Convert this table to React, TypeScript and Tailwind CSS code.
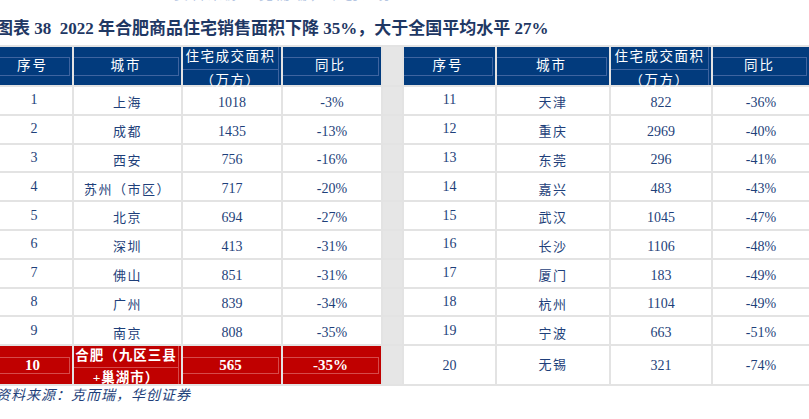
import React from "react";

const serif = { fontFamily: '"Liberation Serif", "Noto Sans CJK SC", serif' };

const left: [string, string, string, string][] = [
  ["1", "上海", "1018", "-3%"],
  ["2", "成都", "1435", "-13%"],
  ["3", "西安", "756", "-16%"],
  ["4", "苏州（市区）", "717", "-20%"],
  ["5", "北京", "694", "-27%"],
  ["6", "深圳", "413", "-31%"],
  ["7", "佛山", "851", "-31%"],
  ["8", "广州", "839", "-34%"],
  ["9", "南京", "808", "-35%"],
];

const right: [string, string, string, string][] = [
  ["11", "天津", "822", "-36%"],
  ["12", "重庆", "2969", "-40%"],
  ["13", "东莞", "296", "-41%"],
  ["14", "嘉兴", "483", "-43%"],
  ["15", "武汉", "1045", "-47%"],
  ["16", "长沙", "1106", "-48%"],
  ["17", "厦门", "183", "-49%"],
  ["18", "杭州", "1104", "-49%"],
  ["19", "宁波", "663", "-51%"],
  ["20", "无锡", "321", "-74%"],
];

function HeadCell({ children, two }: { children?: React.ReactNode; two?: boolean }) {
  return (
    <div className="bg-[#023b7d] flex items-center text-white">
      {two ? (
        <div className="w-full h-full flex flex-col border-r border-[#3e64a0] mr-[2px]">
          <div className="flex-1 flex items-end justify-center pb-[2px] border-b border-[#3e64a0] text-[13.5px] tracking-[1.5px]">
            住宅成交面积
          </div>
          <div className="flex-1 flex items-start justify-center pt-[1px] text-[13.5px] tracking-[1.5px]">
            （万方）
          </div>
        </div>
      ) : (
        <div className="w-full h-[19px] mr-[2px] border-y border-r border-[#3e64a0] flex items-center justify-center text-[13.5px] tracking-[2px]">
          {children}
        </div>
      )}
    </div>
  );
}

function Header() {
  return (
    <>
      <HeadCell>序号</HeadCell>
      <HeadCell>城市</HeadCell>
      <HeadCell two />
      <HeadCell>同比</HeadCell>
    </>
  );
}

function Mid() {
  return <div className="bg-[#e6e6e6]" />;
}

function DataCells({ r }: { r: [string, string, string, string] }) {
  return (
    <>
      <div className="bg-white flex items-center justify-center pb-[1px] text-[14px] text-[#1e3f7a]">{r[0]}</div>
      <div className="bg-white flex items-end justify-center pb-[1px] text-[13px] tracking-[1.5px] text-[#1e3f7a]">{r[1]}</div>
      <div className="bg-white flex items-end justify-center pb-[1px] text-[14px] text-[#1e3f7a]">{r[2]}</div>
      <div className="bg-white flex items-end justify-center pb-[1px] text-[14px] text-[#1e3f7a]">{r[3]}</div>
    </>
  );
}

function CenterCells({ r }: { r: [string, string, string, string] }) {
  return (
    <>
      <div className="bg-white flex items-center justify-center text-[14px] text-[#1e3f7a]">{r[0]}</div>
      <div className="bg-white flex items-center justify-center text-[13px] tracking-[1.5px] text-[#1e3f7a]">{r[1]}</div>
      <div className="bg-white flex items-center justify-center text-[14px] text-[#1e3f7a]">{r[2]}</div>
      <div className="bg-white flex items-center justify-center text-[14px] text-[#1e3f7a]">{r[3]}</div>
    </>
  );
}

function RedCell({ children }: { children: React.ReactNode }) {
  return (
    <div className="bg-[#c00000] flex items-center text-white font-bold">
      <div className="w-full h-[17px] mr-[2px] border-y border-r border-[#d64a4a] flex items-center justify-center text-[15px]">
        {children}
      </div>
    </div>
  );
}

export default function App() {
  return (
    <div className="w-[809px] h-[419px] overflow-hidden bg-white" style={serif}>
      <div className="ml-[-4px] w-[813px]">
        <div className="h-[5px] overflow-hidden">
          <div className="ml-[178px] mt-[-13px] text-[14px] leading-[16px] text-[#b5c6e2] tracking-[3px]">资料来源：克而瑞，华创证券</div>
        </div>
        <div className="h-[40px] pt-[14px] text-[17px] leading-[20px] font-bold text-[#1f3864] whitespace-nowrap">
          图表 38&nbsp; 2022 年合肥商品住宅销售面积下降 35%，大于全国平均水平 27%
        </div>
        <div className="bg-[#e3e3e3] py-[2px]">
          <div className="grid grid-cols-[76px_107px_98px_98px_19px_91px_112px_100px_96px] grid-rows-[38px_repeat(9,26.8px)_38px] gap-[2px]">
            <Header />
            <Mid />
            <Header />
            {left.map((r, i) => (
              <React.Fragment key={r[0]}>
                <DataCells r={r} />
                <Mid />
                <DataCells r={right[i]} />
              </React.Fragment>
            ))}
            <RedCell>10</RedCell>
            <div className="bg-[#c00000] flex items-center text-white">
              <div className="w-full h-full flex flex-col mr-[2px] border-r border-[#d64a4a] text-[13.5px] font-semibold tracking-[1px]">
                <div className="flex-1 flex items-end justify-center pb-[1px] border-b border-[#d64a4a] whitespace-nowrap">合肥（九区三县</div>
                <div className="flex-1 flex items-start justify-center">+巢湖市）</div>
              </div>
            </div>
            <RedCell>565</RedCell>
            <RedCell>-35%</RedCell>
            <Mid />
            <CenterCells r={right[9]} />
          </div>
        </div>
        <div className="pt-[1px] text-[14px] italic text-[#1e3f7a] tracking-[1px] leading-[17px]">
          资料来源：克而瑞，华创证券
        </div>
      </div>
    </div>
  );
}
